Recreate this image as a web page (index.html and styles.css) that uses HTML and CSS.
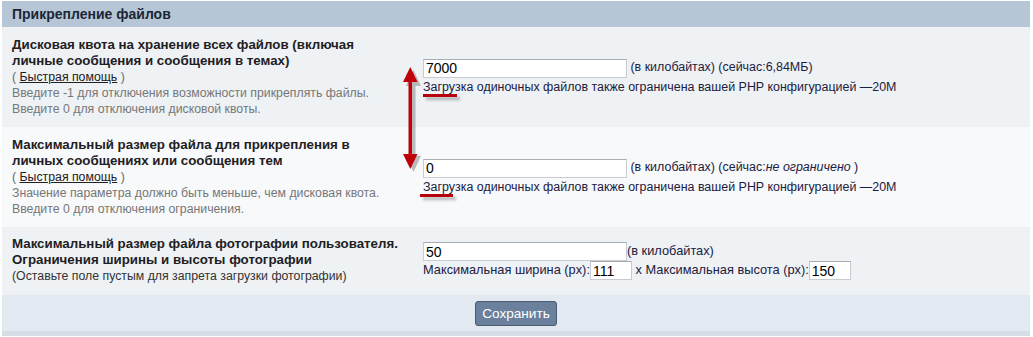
FILE: index.html
```html
<!DOCTYPE html>
<html lang="ru">
<head>
<meta charset="utf-8">
<title>Прикрепление файлов</title>
<link rel="stylesheet" href="styles.css">
</head>
<body>
<div class="wrap">
  <div class="panel">
    <div class="head">Прикрепление файлов</div>

    <div class="row row-a">
      <div class="label">
        <div class="title">Дисковая квота на хранение всех файлов (включая личные сообщения и сообщения в темах)</div>
        <div class="help">( <a href="#">Быстрая помощь</a> )</div>
        <div class="desc">Введите -1 для отключения возможности прикреплять файлы.<br>Введите 0 для отключения дисковой квоты.</div>
      </div>
      <div class="field">
        <div class="line"><input class="inp wide" type="text" value="7000"> <span>(в килобайтах) (сейчас:6,84МБ)</span></div>
        <div class="line"><span class="mark">Загру</span>зка одиночных файлов также ограничена вашей PHP конфигурацией —20M</div>
      </div>
    </div>

    <div class="row row-b">
      <div class="label">
        <div class="title">Максимальный размер файла для прикрепления в личных сообщениях или сообщения тем</div>
        <div class="help">( <a href="#">Быстрая помощь</a> )</div>
        <div class="desc">Значение параметра должно быть меньше, чем дисковая квота.<br>Введите 0 для отключения ограничения.</div>
      </div>
      <div class="field">
        <div class="line"><input class="inp wide" type="text" value="0"> <span>(в килобайтах) (сейчас:<i>не ограничено</i> )</span></div>
        <div class="line"><span class="mark mark2">Загру</span>зка одиночных файлов также ограничена вашей PHP конфигурацией —20M</div>
      </div>
    </div>

    <div class="row row-a row-c">
      <div class="label">
        <div class="title">Максимальный размер файла фотографии пользователя. Ограничения ширины и высоты фотографии</div>
        <div class="sub">(Оставьте поле пустым для запрета загрузки фотографии)</div>
      </div>
      <div class="field field-c">
        <div class="line"><input class="inp wide" type="text" value="50"><span>(в килобайтах)</span></div>
        <div class="line">Максимальная ширина (px):<input class="inp small" type="text" value="111"> x Максимальная высота (px):<input class="inp small" type="text" value="150"></div>
      </div>
    </div>

    <div class="foot"><button class="btn" type="button">Сохранить</button></div>

    <svg class="arrow" width="30" height="112" viewBox="0 0 30 112" aria-hidden="true">
      <g fill="#8a8a8a" opacity="0.55" transform="translate(3,3)">
        <rect x="8.5" y="12" width="4" height="86"/>
        <polygon points="10.5,1 3,17 18,17"/>
        <polygon points="10.5,103 3,87 18,87"/>
      </g>
      <g fill="#c0000a">
        <rect x="8.5" y="12" width="3.5" height="86"/>
        <polygon points="10.3,1 3,16 17.5,16"/>
        <polygon points="10.3,103 3,88 17.5,88"/>
      </g>
    </svg>
  </div>
</div>
</body>
</html>
```

FILE: styles.css
```css
html, body {
  margin: 0;
  padding: 0;
  background: #ffffff;
}

.wrap {
  padding: 1px 3px 2px 2px;
  font-family: "Liberation Sans", Arial, sans-serif;
  font-size: 12px;
  color: #1e2233;
}

.panel {
  position: relative;
  border-bottom: 5px solid #d6dde4;
}

.head {
  background: #b7c6d6;
  height: 26px;
  line-height: 26px;
  padding-left: 10px;
  font-size: 14px;
  font-weight: bold;
  color: #1b2636;
}

.row {
  display: grid;
  grid-template-columns: 411px 1fr;
  align-items: center;
}

.row-a { background: #eef2f5; }
.row-b { background: #f7f9fb; }

.label {
  padding: 10px 10px 10px 10px;
  line-height: 16px;
  align-self: start;
}

.row-c .label {
  padding: 9px 10px 11px 10px;
}

.title {
  font-size: 13.3px;
  font-weight: bold;
  color: #1f2022;
}

.help {
  color: #666;
  font-size: 12.3px;
}

.help a {
  color: #1f2022;
  text-decoration: underline;
}

.desc {
  color: #777;
  font-size: 12.3px;
}

.sub {
  color: #333;
  font-size: 12.3px;
}

.field {
  padding: 0 10px;
  color: #1c2040;
  font-size: 12.45px;
}

.field-c {
  font-size: 12.8px;
}

.line {
  line-height: 18px;
  white-space: nowrap;
}

.inp {
  box-sizing: border-box;
  height: 19px;
  margin: 0;
  padding: 0 2px;
  border: 1px solid #c8ccd2;
  border-top-color: #a9adb3;
  background: #fff;
  font-family: "Liberation Sans", Arial, sans-serif;
  font-size: 14px;
  color: #000;
  vertical-align: middle;
}

.wide { width: 204px; }
.small { width: 42px; }

.mark {
  position: relative;
}

.mark::after {
  content: "";
  position: absolute;
  left: 0;
  right: -2px;
  bottom: -3px;
  height: 3px;
  background: #b8000b;
  box-shadow: 3px 3px 3px rgba(90, 90, 90, 0.45);
}

.mark2::after {
  left: -3px;
  right: 2px;
}

.foot {
  background: #e3e9f0;
  height: 36px;
  display: flex;
  align-items: center;
  justify-content: center;
}

.btn {
  box-sizing: border-box;
  width: 82px;
  height: 25px;
  margin: 0;
  padding: 0;
  background: #6b809c;
  border: 1px solid #4a5a70;
  border-radius: 3px;
  color: #ffffff;
  font-family: "Liberation Sans", Arial, sans-serif;
  font-size: 13.6px;
}

.arrow {
  position: absolute;
  left: 398px;
  top: 65px;
}
```
